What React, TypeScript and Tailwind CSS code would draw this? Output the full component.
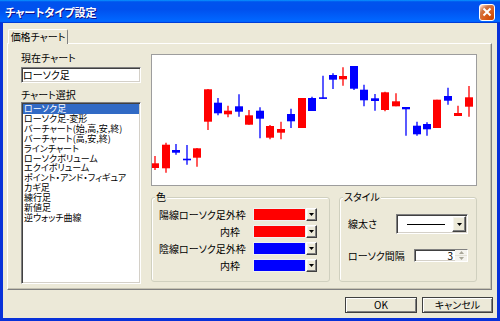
import React from 'react';

type Candle = [number, number, number, number, 'r' | 'b'];

// body top, body bottom, wick top, wick bottom, colour
const candles: Candle[] = [
  [163.3, 168, 156, 170, 'r'],
  [144.7, 168.3, 142.7, 172.7, 'r'],
  [150, 152.7, 144, 154.7, 'b'],
  [158.7, 160, 145, 164.7, 'b'],
  [148.3, 157.7, 148, 166.7, 'r'],
  [89.3, 121.7, 89, 130, 'r'],
  [102.7, 113.3, 98, 115.3, 'b'],
  [110.7, 114.3, 105.7, 117.3, 'r'],
  [106.3, 111.7, 94.3, 116.7, 'b'],
  [115.3, 124.7, 110, 124.7, 'r'],
  [110.7, 118.7, 107.3, 138.3, 'b'],
  [126, 137.7, 125, 139.3, 'r'],
  [129, 132.7, 121.7, 139.3, 'r'],
  [114, 121.3, 108.7, 128, 'b'],
  [98, 128, 98, 128, 'r'],
  [98, 111, 96.7, 111, 'b'],
  [97.3, 98.7, 75.7, 98.7, 'b'],
  [75, 79.7, 73.3, 89, 'b'],
  [76, 79.3, 67.3, 85.7, 'r'],
  [66, 88.7, 66, 90, 'b'],
  [89.7, 100.3, 84.7, 106.3, 'b'],
  [98.3, 101, 94, 110.7, 'b'],
  [92.3, 110, 91.7, 111.3, 'r'],
  [101.3, 106.3, 93.3, 106.3, 'r'],
  [107, 109.3, 107, 135.7, 'b'],
  [125.7, 134.3, 121.7, 135.7, 'b'],
  [124, 129.3, 122.3, 135.7, 'b'],
  [99.7, 128, 99.7, 128, 'r'],
  [96, 100.7, 87.7, 104.7, 'b'],
  [113, 116, 105.7, 116, 'r'],
  [97.3, 106.7, 86, 116.7, 'r'],
];

const chartTypes = [
  'ローソク足',
  'ローソク足-変形',
  'バーチャート(始,高,安,終)',
  'バーチャート(高,安,終)',
  'ラインチャート',
  'ローソクボリューム',
  'エクイボリューム',
  'ポイント・アンド・フィギュア',
  'カギ足',
  '練行足',
  '新値足',
  '逆ウォッチ曲線',
];

const colorRows = [
  { label: '陽線ローソク足外枠', color: 'bg-[#ff0000]' },
  { label: '内枠', color: 'bg-[#ff0000]' },
  { label: '陰線ローソク足外枠', color: 'bg-[#0000ff]' },
  { label: '内枠', color: 'bg-[#0000ff]' },
];

const sunken =
  'border border-t-[#808080] border-l-[#808080] border-r-white border-b-white shadow-[inset_1px_1px_0_#404040,inset_-1px_-1px_0_#d4d0c8]';

const raised =
  'border border-t-white border-l-white border-r-[#404040] border-b-[#404040] shadow-[inset_-1px_-1px_0_#808080,inset_1px_1px_0_#f4f3ee]';

const Arrow: React.FC<{ faded?: boolean; up?: boolean }> = ({ faded, up }) => (
  <svg width="5" height="3" viewBox="0 0 5 3" className="block">
    <path d={up ? 'M0 3h5L2.5 0z' : 'M0 0h5L2.5 3z'} fill={faded ? '#a8a698' : '#000'} />
  </svg>
);

const CandleChart: React.FC = () => (
  <svg viewBox="152 55 324 130" className="block w-[324px] h-[130px]">
    {candles.map(([bt, bb, wt, wb, c], i) => {
      const x = Math.round(151.3 + i * 10.45);
      const col = c === 'r' ? '#ff0000' : '#0000ff';
      return (
        <g key={i}>
          <line x1={x + 4} x2={x + 4} y1={wt} y2={wb} stroke={col} strokeWidth={1.3} />
          <rect x={x} y={bt} width={8} height={Math.max(bb - bt, 1.6)} fill={col} />
        </g>
      );
    })}
  </svg>
);

const App: React.FC = () => {
  return (
    <div className="w-[500px] h-[321px] flex flex-col bg-[#0831d9] text-black font-['Noto_Sans_CJK_JP',sans-serif] [font-feature-settings:'palt'] overflow-hidden">
      {/* Title bar */}
      <div className="h-[23px] flex items-center justify-between pl-[5px] pr-[5px] bg-[linear-gradient(180deg,#0997ff,#0053ee_8%,#0050ee_40%,#06f_88%,#06f_93%,#005bff_95%,#003dd7_96%,#003dd7)]">
        <span className="text-white font-bold text-[11px] leading-[14px] [text-shadow:1px_1px_#0f1089]">
          チャートタイプ設定
        </span>
        <div className="w-[16px] h-[17px] mt-[1px] flex items-center justify-center rounded-[3px] border border-white bg-[radial-gradient(circle_at_90%_90%,#cc4600_0,#dc6527_55%,#cd7546_70%,#ffccb2_90%,#fff_100%)]">
          <svg width="10" height="10" viewBox="0 0 10 10">
            <path d="M1.5 1.5l7 7M8.5 1.5l-7 7" stroke="#fff" strokeWidth="2" />
          </svg>
        </div>
      </div>

      {/* Dialog body */}
      <div className="flex-1 mx-[3px] mb-[3px] bg-[#ece9d8] flex flex-col">
        <div className="pl-[4px] pr-[5px] pt-[6px]">
          {/* Tab */}
          <div className="flex">
            <div className="relative z-10 ml-[1px] -mb-px h-[15px] w-[60px] flex items-center justify-center bg-[#ece9d8] border-l border-t border-white border-r border-r-[#808080] rounded-t-[2px] text-[10px] leading-[12px]">
              価格チャート
            </div>
          </div>

          {/* Tab panel */}
          <div className="h-[247px] border border-t-white border-l-white border-r-[#808080] border-b-[#808080] shadow-[inset_-1px_-1px_0_#c5c2b2] flex pl-[13px] pt-[10px] gap-[10px] text-[10px]">
            {/* Left column */}
            <div className="w-[120px] flex flex-col">
              <div className="leading-[12px] -mt-[2px]">現在チャート</div>
              <div className={`mt-[3px] h-[16px] bg-white ${sunken} flex items-center pl-[1px] leading-[12px]`}>
                ローソク足
              </div>
              <div className="mt-[6px] leading-[12px]">チャート選択</div>
              <div className={`mt-[1px] h-[182px] bg-white ${sunken} p-[1px]`}>
                {chartTypes.map((t, i) => (
                  <div
                    key={t}
                    className={`h-[9.85px] flex items-center text-[9px] leading-[9px] pl-[1px] whitespace-nowrap ${
                      i === 0 ? 'bg-[#316ac5] text-white' : ''
                    }`}
                  >
                    {t}
                  </div>
                ))}
              </div>
            </div>

            {/* Right column */}
            <div className="w-[326px] flex flex-col">
              <div className="h-[132px] border border-[#9d9d9d] bg-white">
                <CandleChart />
              </div>

              <div className="mt-[11px] flex gap-[9px]">
                {/* Colour group */}
                <div className="relative w-[179px] h-[85px] border border-[#d0d0bf] rounded-[3px] shadow-[inset_1px_1px_0_#fff] pl-[7px] pr-[12px] pt-[10px] flex flex-col gap-[4px]">
                  <span className="absolute -top-[7px] left-[3px] px-[1px] bg-[#ece9d8] leading-[12px]">色</span>
                  {colorRows.map((r, i) => (
                    <div key={i} className="flex items-center h-[13px]">
                      <div className="w-[81px] text-right leading-[12px] whitespace-nowrap">{r.label}</div>
                      <div className="ml-auto w-[64px] h-[13px] flex">
                        <div className={`flex-1 ${r.color} border border-[#f0f0f0]`} />
                        <div className={`w-[11px] bg-[#ece9d8] ${raised} flex items-center justify-center`}>
                          <Arrow />
                        </div>
                      </div>
                    </div>
                  ))}
                </div>

                {/* Style group */}
                <div className="relative w-[138px] h-[85px] border border-[#d0d0bf] rounded-[3px] shadow-[inset_1px_1px_0_#fff] pl-[8px] pr-[8px] pt-[16px] flex flex-col">
                  <span className="absolute -top-[7px] left-[3px] px-[1px] bg-[#ece9d8] leading-[12px]">スタイル</span>
                  <div className="flex items-center justify-between h-[20px]">
                    <span className="leading-[12px]">線太さ</span>
                    <div className={`w-[72px] h-[20px] bg-white ${sunken} flex items-center pl-[10px] pr-[1px]`}>
                      <div className="w-[38px] h-px bg-black" />
                      <div className={`ml-auto w-[14px] h-[16px] bg-[#ece9d8] ${raised} flex items-center justify-center`}>
                        <Arrow />
                      </div>
                    </div>
                  </div>
                  <div className="mt-[15px] flex items-center justify-between h-[13px]">
                    <span className="leading-[12px]">ローソク間隔</span>
                    <div className={`w-[54px] h-[13px] bg-white ${sunken} flex items-center`}>
                      <span className="flex-1 text-right pr-[2px] leading-[11px]">3</span>
                      <div className="w-[12px] h-full flex flex-col bg-[#f4f3ee]">
                        <div className="flex-1 flex items-center justify-center border-b border-[#e3e1d6]">
                          <Arrow faded up />
                        </div>
                        <div className="flex-1 flex items-center justify-center">
                          <Arrow faded />
                        </div>
                      </div>
                    </div>
                  </div>
                </div>
              </div>
            </div>
          </div>
        </div>

        {/* Buttons */}
        <div className="mt-[7px] flex justify-end gap-[5px] pr-[4px] text-[10px]">
          <button className="w-[72px] h-[16px] bg-[#ece9d8] border border-[#404040] shadow-[inset_1px_1px_0_#fff,inset_-1px_-1px_0_#808080] leading-[12px]">
            OK
          </button>
          <button className="w-[71px] h-[16px] bg-[#ece9d8] border border-[#404040] shadow-[inset_1px_1px_0_#fff,inset_-1px_-1px_0_#808080] leading-[12px]">
            キャンセル
          </button>
        </div>
      </div>
    </div>
  );
};

export default App;
